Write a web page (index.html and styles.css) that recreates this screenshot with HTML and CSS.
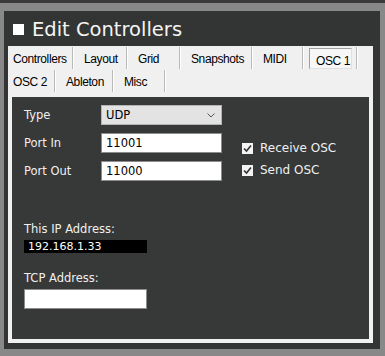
FILE: index.html
```html
<!DOCTYPE html>
<html lang="en">
<head>
    <meta charset="UTF-8">
    <title>Edit Controllers</title>
    <link rel="stylesheet" href="styles.css">
</head>
<body>
    <div class="topbar"></div>
    <div class="window">
        <!-- Titulo de la ventana -->
        <div class="title">
            <span class="title-square"></span>
            <span class="title-text">Edit Controllers</span>
        </div>

        <div class="tab-control">
            <div class="tab-row">
                <div class="tab" style="width: 65px; padding-left: 5px;">Controllers</div>
                <div class="tab" style="width: 54px;">Layout</div>
                <div class="tab" style="width: 53px;">Grid</div>
                <div class="tab" style="width: 72px;">Snapshots</div>
                <div class="tab" style="width: 51px;">MIDI</div>
                <div class="tab tab-active" style="width: 54px;"><span>OSC 1</span></div>
            </div>
            <div class="tab-row">
                <div class="tab" style="width: 47px; padding-left: 5px;">OSC 2</div>
                <div class="tab" style="width: 58px;">Ableton</div>
                <div class="tab" style="width: 52px;">Misc</div>
            </div>

            <!-- Panel de configuracion OSC -->
            <div class="panel">
                <div class="form">
                    <label class="field-label">Type</label>
                    <div class="select">
                        <span>UDP</span>
                        <svg class="chevron" width="8" height="5" viewBox="0 0 8 5">
                            <polyline points="0.5,0.5 4,4 7.5,0.5" fill="none" stroke="#555" stroke-width="1"/>
                        </svg>
                    </div>

                    <label class="field-label">Port In</label>
                    <div class="input">11001</div>

                    <label class="field-label">Port Out</label>
                    <div class="input">11000</div>

                    <div class="checks">
                        <div class="check"><span class="box"><svg width="11" height="11" viewBox="0 0 11 11"><polyline points="2,5.5 4.5,8 9,2.5" fill="none" stroke="#333" stroke-width="1.6"/></svg></span>Receive OSC</div>
                        <div class="check"><span class="box"><svg width="11" height="11" viewBox="0 0 11 11"><polyline points="2,5.5 4.5,8 9,2.5" fill="none" stroke="#333" stroke-width="1.6"/></svg></span>Send OSC</div>
                    </div>
                </div>

                <div class="ip-section">
                    <div class="field-label">This IP Address:</div>
                    <div class="ip-box">192.168.1.33</div>
                    <div class="field-label tcp-label">TCP Address:</div>
                    <div class="input tcp-input"></div>
                </div>
            </div>
        </div>
    </div>
</body>
</html>
```

FILE: styles.css
```css
/* Fondo del escritorio */
body {
    margin: 0;
    background: #888888;
    font-family: "DejaVu Sans", Verdana, sans-serif;
    width: 385px;
    height: 356px;
    overflow: hidden;
}

.topbar {
    height: 3px;
    background: #3a3a3a;
}

.window {
    margin: 8px 5px 0 4px;
    height: 338px;
    background: #333434;
    display: flex;
    flex-direction: column;
}

.title {
    height: 35px;
    display: flex;
    align-items: center;
    padding-left: 9px;
    padding-top: 1px;
    box-sizing: border-box;
}

.title-square {
    width: 11px;
    height: 11px;
    background: #ffffff;
    margin-right: 8px;
}

.title-text {
    color: #f4f4f4;
    font-size: 19.5px;
}

/* Control de pestañas */
.tab-control {
    margin: 0 7px 0 4px;
    height: 297px;
    background: #f0f0f0;
    padding: 1px 4px 4px 4px;
    box-sizing: border-box;
    display: flex;
    flex-direction: column;
}

.tab-row {
    display: flex;
    height: 22px;
    margin: 0 -4px 1px -4px;
}

.tab {
    box-sizing: border-box;
    height: 22px;
    padding-left: 11px;
    padding-top: 5px;
    font-family: "Liberation Sans", Arial, sans-serif;
    font-size: 12px;
    letter-spacing: -0.4px;
    color: #000;
    border-right: 1px solid #b9b9b9;
    box-shadow: 1px 0 0 #ffffff;
}

.tab-active {
    padding: 1px 4px 0 6px;
}

.tab-active span {
    display: block;
    height: 21px;
    box-sizing: border-box;
    border: 1px solid #a0a0a0;
    border-right-color: #e0e0e0;
    border-bottom-color: #e0e0e0;
    background: #f7f7f7;
    padding: 5px 0 0 6px;
}

.panel {
    margin-top: 4px;
    flex: 1;
    background: #373838;
    padding: 8px 12px;
    color: #f0f0f0;
}

.form {
    display: grid;
    grid-template-columns: 77px 121px auto;
    grid-auto-rows: 20px;
    row-gap: 8px;
    align-items: center;
}

.field-label {
    grid-column: 1;
    font-size: 11.5px;
    line-height: 14px;
    color: #f0f0f0;
}

.select {
    grid-column: 2;
    height: 20px;
    box-sizing: border-box;
    background: #e3e3e3;
    border: 1px solid #b4b4b4;
    display: flex;
    align-items: center;
    justify-content: space-between;
    padding: 0 6px 0 4px;
    font-size: 11.5px;
    color: #000;
}

.input {
    grid-column: 2;
    height: 20px;
    box-sizing: border-box;
    background: #ffffff;
    border: 1px solid #8c8c8c;
    padding: 2px 4px;
    font-size: 11.5px;
    line-height: 14px;
    color: #000;
}

.checks {
    grid-column: 3;
    grid-row: 2 / span 2;
    align-self: start;
    padding: 8px 0 0 20px;
    display: flex;
    flex-direction: column;
    gap: 8px;
}

.check {
    display: flex;
    align-items: center;
    height: 14px;
    font-size: 12px;
    gap: 7px;
}

.box {
    width: 11px;
    height: 11px;
    background: #f4f4f4;
    display: block;
}

.box svg {
    display: block;
}

.ip-section {
    margin-top: 41px;
    width: 123px;
}

.ip-box {
    margin-top: 4px;
    height: 13px;
    background: #000000;
    color: #ffffff;
    font-size: 11px;
    line-height: 13px;
    padding-left: 4px;
}

.tcp-label {
    margin-top: 18px;
}

.tcp-input {
    margin-top: 4px;
}
```
